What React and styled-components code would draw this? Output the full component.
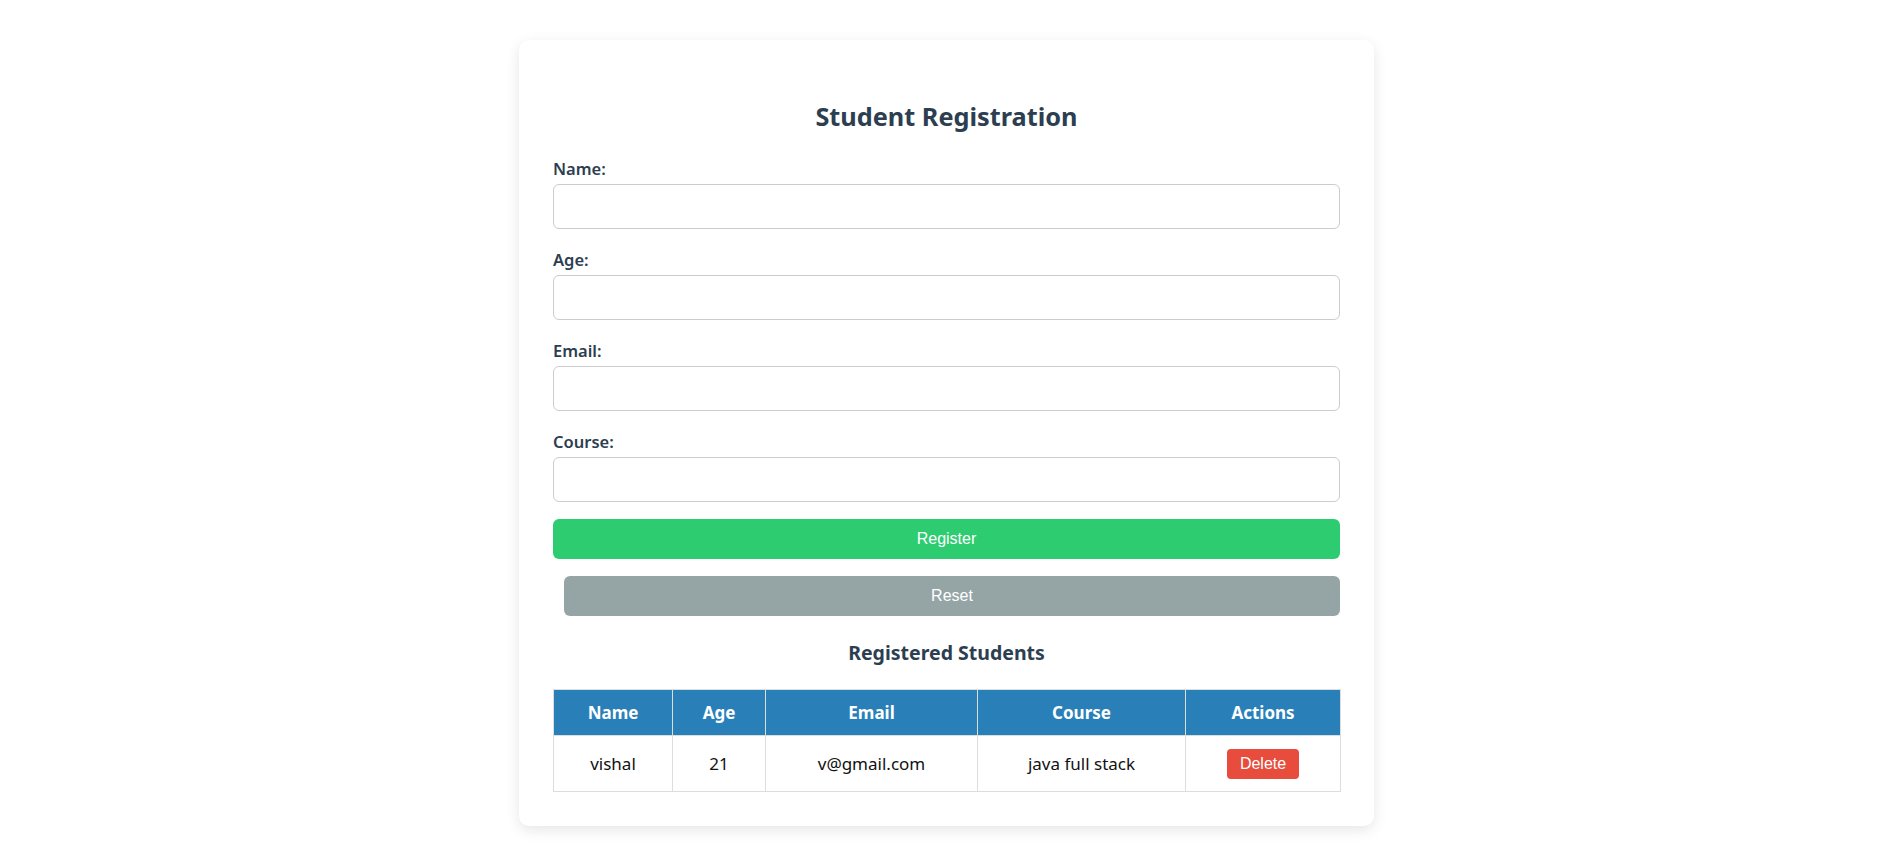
import React from "react";
import styled, { createGlobalStyle } from "styled-components";

const FONT = `"Noto Sans", "Open Sans", sans-serif`;

const Global = createGlobalStyle`
  html, body { margin: 0; padding: 0; }
  body {
    background: #ffffff;
    font-family: ${FONT};
    color: #2c3e50;
  }
  * { box-sizing: border-box; }
`;

const Page = styled.div`
  display: flex;
  justify-content: center;
  padding: 40px 10px 30px 0;
`;

const Card = styled.div`
  width: 855px;
  background: #fff;
  border-radius: 10px;
  box-shadow: 0 4px 14px rgba(0, 0, 0, 0.1);
  padding: 34px;
`;

const Title = styled.h2`
  margin: 26px 0 27px;
  text-align: center;
  font-size: 25.3px;
  line-height: 32px;
  font-weight: 700;
  color: #2c3e50;
`;

const Form = styled.form`
  display: flex;
  flex-direction: column;
`;

const Field = styled.div`
  display: flex;
  flex-direction: column;
  margin-bottom: 21px;
  &:last-of-type { margin-bottom: 17px; }
`;

const Label = styled.label`
  font-size: 16.5px;
  line-height: 20px;
  font-weight: 600;
  color: #2c3e50;
  margin-bottom: 5px;
`;

const Input = styled.input`
  height: 45px;
  width: 100%;
  border: 1px solid #ccc;
  border-radius: 6px;
  padding: 10px 12px;
  font-size: 16px;
  font-family: ${FONT};
  background: #fff;
  outline: none;
`;

const Button = styled.button`
  height: 40px;
  border: none;
  border-radius: 6px;
  color: #fff;
  font-family: "Liberation Sans", Arial, sans-serif;
  font-size: 16px;
  cursor: pointer;
  background: ${(p) => (p.$variant === "reset" ? "#95a5a6" : "#2ecc71")};
  margin-left: ${(p) => (p.$variant === "reset" ? "11px" : "0")};
  margin-top: ${(p) => (p.$variant === "reset" ? "17px" : "0")};
`;

const SubTitle = styled.h3`
  margin: 24px 0 23px;
  text-align: center;
  font-size: 19.5px;
  line-height: 26px;
  font-weight: 700;
  color: #2c3e50;
`;

const Table = styled.table`
  width: 100%;
  border-collapse: collapse;
  table-layout: fixed;
  border: 1px solid #ddd;
`;

const Th = styled.th`
  width: ${(p) => p.$w}px;
  background: #2980b9;
  color: #fff;
  font-weight: 700;
  font-size: 17px;
  height: 46px;
  padding: 0 8px;
  border: 1px solid #ddd;
  text-align: center;
`;

const Td = styled.td`
  height: 56px;
  padding: 0 8px;
  border: 1px solid #ddd;
  text-align: center;
  font-size: 17px;
  color: #111;
`;

const DeleteButton = styled.button`
  background: #e74c3c;
  color: #fff;
  border: none;
  border-radius: 4px;
  font-family: "Liberation Sans", Arial, sans-serif;
  font-size: 16px;
  height: 30px;
  padding: 0 13px;
  cursor: pointer;
`;

const fields = ["Name", "Age", "Email", "Course"];
const cols = [
  { label: "Name", w: 119 },
  { label: "Age", w: 93 },
  { label: "Email", w: 212 },
  { label: "Course", w: 208 },
  { label: "Actions", w: 155 },
];

export default function App() {
  return (
    <>
      <Global />
      <Page>
        <Card>
          <Title>Student Registration</Title>
          <Form onSubmit={(e) => e.preventDefault()}>
            {fields.map((f) => (
              <Field key={f}>
                <Label>{f}:</Label>
                <Input type="text" />
              </Field>
            ))}
            <Button type="submit">Register</Button>
            <Button type="button" $variant="reset">
              Reset
            </Button>
          </Form>
          <SubTitle>Registered Students</SubTitle>
          <Table>
            <thead>
              <tr>
                {cols.map((c) => (
                  <Th key={c.label} $w={c.w}>
                    {c.label}
                  </Th>
                ))}
              </tr>
            </thead>
            <tbody>
              <tr>
                <Td>vishal</Td>
                <Td>21</Td>
                <Td>v@gmail.com</Td>
                <Td>java full stack</Td>
                <Td>
                  <DeleteButton>Delete</DeleteButton>
                </Td>
              </tr>
            </tbody>
          </Table>
        </Card>
      </Page>
    </>
  );
}
